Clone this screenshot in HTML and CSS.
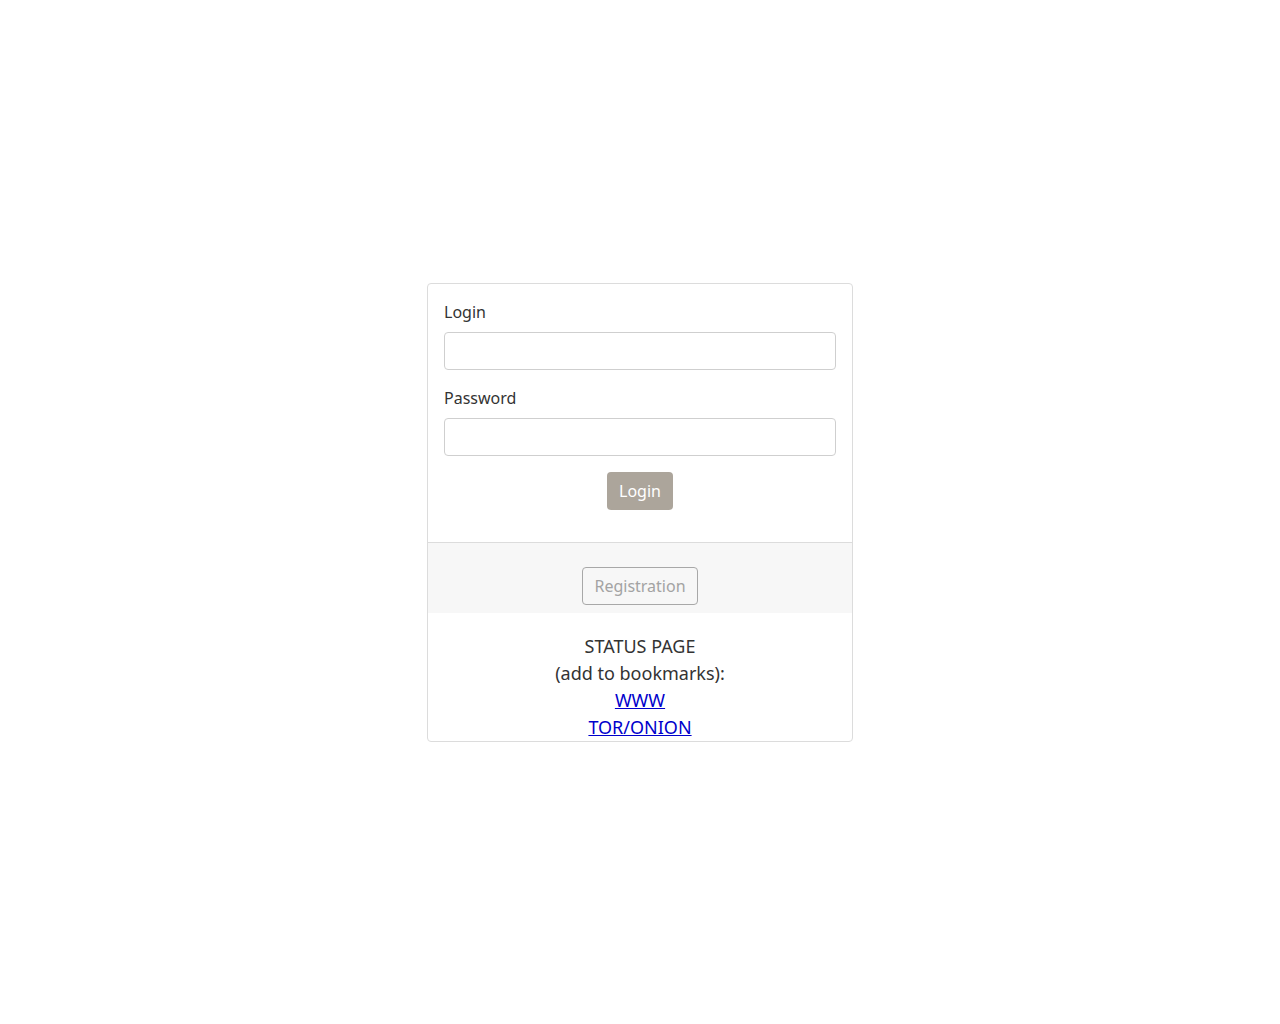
FILE: index.html
```html
<!DOCTYPE html>
<html>
<head>
<meta charset="utf-8">
<title>Login</title>
<link rel="stylesheet" href="styles.css">
</head>
<body>
<div class="page">
  <div class="card">
    <form class="card-body">
      <div class="group">
        <label class="label">Login</label>
        <input class="input" type="text">
      </div>
      <div class="group">
        <label class="label">Password</label>
        <input class="input" type="password">
      </div>
      <div class="group center">
        <button class="btn-login" type="button">Login</button>
      </div>
    </form>
    <div class="card-footer">
      <button class="btn-reg" type="button">Registration</button>
    </div>
    <div class="status">
      <div>STATUS PAGE</div>
      <div>(add to bookmarks):</div>
      <div><a href="#">WWW</a></div>
      <div><a href="#">TOR/ONION</a></div>
    </div>
  </div>
</div>
</body>
</html>
```

FILE: styles.css
```css
html, body {
  margin: 0;
  padding: 0;
  background: #fff;
}
body {
  font-family: "Noto Sans", "Open Sans", sans-serif;
  font-size: 16px;
  line-height: 24px;
  color: #333;
}
.page {
  display: flex;
  justify-content: center;
  padding-top: 283px;
}
.card {
  width: 424px;
  border: 1px solid #dcdcdc;
  border-radius: 4px;
  overflow: hidden;
}
.card-body {
  margin: 0;
  padding: 16px 16px 0;
  display: flex;
  flex-direction: column;
}
.group {
  display: flex;
  flex-direction: column;
  margin-bottom: 16px;
}
.group:last-child {
  margin-bottom: 32px;
}
.label {
  font-size: 16px;
  line-height: 24px;
  margin-bottom: 8px;
  color: #333;
}
.input {
  box-sizing: border-box;
  height: 38px;
  width: 100%;
  border: 1px solid #cfcfcf;
  border-radius: 4px;
  background: #fff;
  margin: 0;
  padding: 6px 12px;
  font: inherit;
}
.center {
  align-items: center;
}
.btn-login {
  box-sizing: border-box;
  height: 38px;
  width: 66px;
  border: 0;
  border-radius: 4px;
  background: #aca59b;
  color: #fff;
  font-family: inherit;
  font-size: 16px;
  padding: 0;
}
.card-footer {
  background: #f7f7f7;
  border-top: 1px solid #dcdcdc;
  padding: 24px 0 8px;
  display: flex;
  justify-content: center;
}
.btn-reg {
  box-sizing: border-box;
  height: 38px;
  width: 116px;
  border: 1px solid #a8a8a8;
  border-radius: 4px;
  background: transparent;
  color: #a3a3a3;
  font-family: inherit;
  font-size: 16px;
  padding: 0;
}
.status {
  padding-top: 20px;
  text-align: center;
  font-size: 18px;
  line-height: 27px;
  color: #333;
}
.status a {
  color: #0000cc;
  text-decoration: underline;
}
```
